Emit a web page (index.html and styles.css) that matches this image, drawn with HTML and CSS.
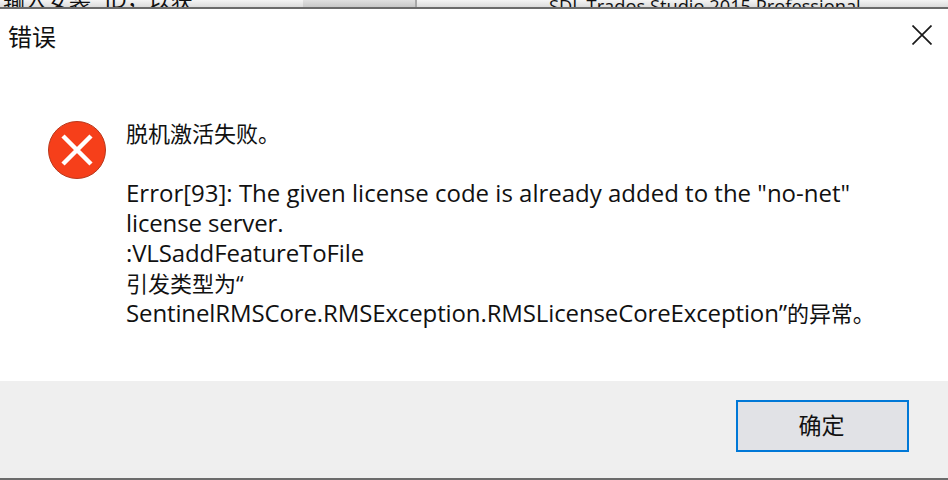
FILE: index.html
```html
<!DOCTYPE html>
<html lang="zh-CN">
<head>
    <meta charset="UTF-8">
    <meta name="viewport" content="width=device-width, initial-scale=1.0">
    <title>错误</title>
    <link rel="stylesheet" href="styles.css">
</head>
<body>

    <div class="behind">
        <div class="behind-left"><span>输入安装 ID，以获</span></div>
        <div class="behind-mid"></div>
        <div class="behind-right"><span>SDL Trados Studio 2015 Professional</span></div>
    </div>

    <div class="dialog">
        <div class="titlebar">
            <div class="title">错误</div>
            <svg class="close" width="20" height="20" viewBox="0 0 20 20">
                <path d="M0.5 0.5 L19.5 19.5 M19.5 0.5 L0.5 19.5" stroke="#1a1a1a" stroke-width="1.7" fill="none"/>
            </svg>
        </div>

        <div class="content">
            <svg class="icon" width="58" height="58" viewBox="0 0 58 58">
                <circle cx="29" cy="29" r="28.5" fill="#f63f1a" stroke="#b8381c" stroke-width="1"/>
                <path d="M15 15 L43 43 M43 15 L15 43" stroke="#fff" stroke-width="4.5" fill="none"/>
            </svg>
            <div class="text">
                <p class="cjk">脱机激活失败。</p>
                <p>&nbsp;</p>
                <p>Error[93]: The given license code is already added to the "no-net"</p>
                <p class="tight">license server.</p>
                <p class="tight">:VLSaddFeatureToFile</p>
                <p class="cjk">引发类型为“</p>
                <p class="tight">SentinelRMSCore.RMSException.RMSLicenseCoreException”<span class="cjk">的异常。</span></p>
            </div>
        </div>

        <div class="footer">
            <button class="ok">确定</button>
        </div>
    </div>

</body>
</html>
```

FILE: styles.css
```css
body {
    margin: 0;
    width: 948px;
    height: 480px;
    overflow: hidden;
    background: #fff;
    display: flex;
    flex-direction: column;
    font-family: "Open Sans", "Noto Sans CJK SC", sans-serif;
    color: #111;
}

/* window behind the dialog */
.behind {
    height: 7px;
    display: flex;
    overflow: hidden;
    background: linear-gradient(#f4f4f4, #dcdcdc);
    border-bottom: 2px solid #6b6b6b;
    font-size: 22px;
    line-height: 26px;
}

.behind span {
    display: block;
    margin-top: -14px;
}

.behind-left {
    width: 300px;
    padding-left: 3px;
    word-spacing: 8px;
}

.behind-mid {
    width: 112px;
    background: linear-gradient(#e0e0e0, #c8c8c8);
    border-right: 2px solid #a8a8a8;
}

.behind-right {
    flex: 1;
    padding-left: 132px;
}

.behind-right span {
    font-size: 18.3px;
    margin-top: -7px;
}

.dialog {
    flex: 1;
    display: flex;
    flex-direction: column;
}

.titlebar {
    height: 56px;
    padding: 0 16px 0 8px;
    display: flex;
    align-items: center;
    justify-content: space-between;
}

.title {
    font-size: 24px;
    margin-top: -3px;
}

.close {
    margin-top: -4px;
}

.content {
    flex: 1;
    display: flex;
    gap: 20px;
    padding: 56px 0 0 48px;
}

.text {
    margin-top: -3px;
    font-size: 24px;
    line-height: 30px;
}

.text p {
    margin: 0;
    white-space: nowrap;
}

.text .cjk {
    font-size: 22px;
}

.text .tight {
    letter-spacing: -0.12px;
}

.footer {
    height: 99px;
    background: #efefef;
    border-bottom: 2px solid #6b6b6b;
    box-sizing: border-box;
    padding: 19px 39px 0 0;
    display: flex;
    justify-content: flex-end;
    align-items: flex-start;
}

.ok {
    width: 173px;
    height: 52px;
    background: #e1e2e6;
    border: 2px solid #0078d7;
    font-family: inherit;
    font-size: 23px;
    color: #111;
    padding: 0 2px 4px 0;
}
```
